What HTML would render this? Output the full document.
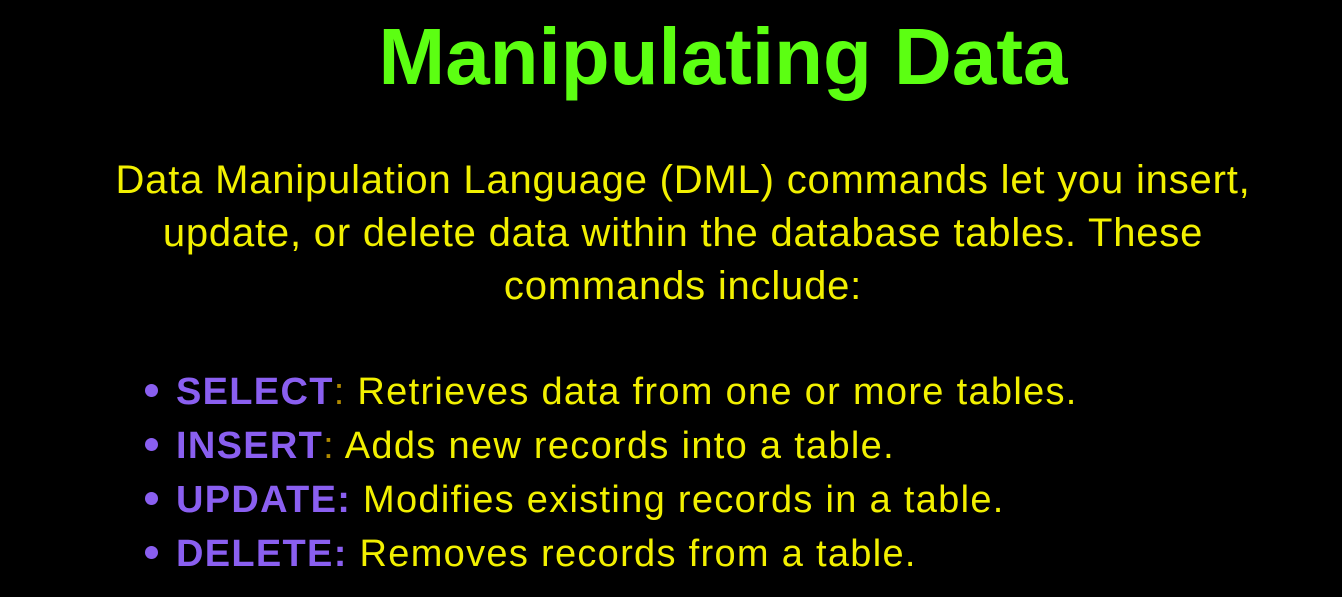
<!DOCTYPE html>
<html><head><meta charset="utf-8"><style>
html,body{margin:0;padding:0;background:#000;width:1342px;height:597px;overflow:hidden;font-family:"Liberation Sans",sans-serif}
.t{position:absolute;white-space:nowrap}
.c{left:12px;width:1342px;text-align:center}
h1{position:absolute;left:0;top:11px;width:1446px;margin:0;text-align:center;font-size:80px;font-weight:bold;color:#5cff12;letter-spacing:0}
.p{color:#f2f000;font-size:40px;letter-spacing:0.8px}
.b{color:#f2f000;font-size:38px;left:145px;letter-spacing:1.3px}
.b b{color:#8a5ff0}
.b i{font-style:normal;color:#b08a00}
.dot{display:inline-block;width:13px;height:13px;border-radius:50%;background:#8a5ff0;margin-right:18px;vertical-align:middle;position:relative;top:-3px}
</style></head><body>
<h1>Manipulating Data</h1>
<div class="t c p" style="top:158px">Data Manipulation Language (DML) commands let you insert,</div>
<div class="t c p" style="top:211px">update, or delete data within the database tables. These</div>
<div class="t c p" style="top:264px">commands include:</div>
<div class="t b" style="top:371px"><span class="dot"></span><b>SELECT</b><i>:</i> Retrieves data from one or more tables.</div>
<div class="t b" style="top:425px"><span class="dot"></span><b>INSERT</b><i>:</i> Adds new records into a table.</div>
<div class="t b" style="top:479px"><span class="dot"></span><b>UPDATE:</b> Modifies existing records in a table.</div>
<div class="t b" style="top:533px"><span class="dot"></span><b>DELETE:</b> Removes records from a table.</div>
</body></html>
